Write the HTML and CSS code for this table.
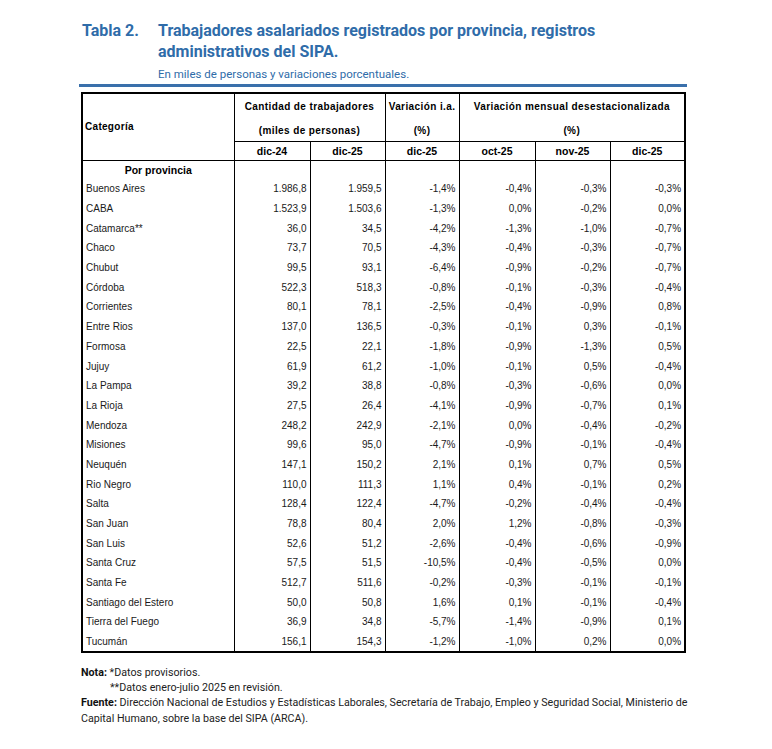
FILE: index.html
```html
<!DOCTYPE html>
<html lang="es">
<head>
<meta charset="utf-8">
<title>Tabla 2</title>
<link rel="stylesheet" href="styles.css">
</head>
<body>
<div class="page">
  <header class="head">
    <div class="num">Tabla 2.</div>
    <div class="titles">
      <h1 class="title">Trabajadores asalariados registrados por provincia, registros administrativos del SIPA.</h1>
      <p class="sub">En miles de personas y variaciones porcentuales.</p>
    </div>
  </header>
  <div class="bar"></div>
  <table class="tbl">
    <colgroup>
      <col class="c-cat"><col class="c-a"><col class="c-b"><col class="c-c"><col class="c-d"><col class="c-e"><col class="c-f">
    </colgroup>
    <thead>
      <tr class="h1">
        <th rowspan="3" class="cat-h">Categoría</th>
        <th colspan="2" class="sp nb">Cantidad de trabajadores</th>
        <th class="sp nb">Variación i.a.</th>
        <th colspan="3" class="sp nb">Variación mensual desestacionalizada</th>
      </tr>
      <tr class="h2">
        <th colspan="2" class="sp nt">(miles de personas)</th>
        <th class="sp nt">(%)</th>
        <th colspan="3" class="sp nt">(%)</th>
      </tr>
      <tr class="h3">
        <th>dic-24</th><th>dic-25</th><th>dic-25</th><th>oct-25</th><th>nov-25</th><th>dic-25</th>
      </tr>
    </thead>
    <tbody>
      <tr class="grp"><td class="grp-t">Por provincia</td><td></td><td></td><td></td><td></td><td></td><td></td></tr>
      <tr><td>Buenos Aires</td><td>1.986,8</td><td>1.959,5</td><td>-1,4%</td><td>-0,4%</td><td>-0,3%</td><td>-0,3%</td></tr>
      <tr><td>CABA</td><td>1.523,9</td><td>1.503,6</td><td>-1,3%</td><td>0,0%</td><td>-0,2%</td><td>0,0%</td></tr>
      <tr><td>Catamarca**</td><td>36,0</td><td>34,5</td><td>-4,2%</td><td>-1,3%</td><td>-1,0%</td><td>-0,7%</td></tr>
      <tr><td>Chaco</td><td>73,7</td><td>70,5</td><td>-4,3%</td><td>-0,4%</td><td>-0,3%</td><td>-0,7%</td></tr>
      <tr><td>Chubut</td><td>99,5</td><td>93,1</td><td>-6,4%</td><td>-0,9%</td><td>-0,2%</td><td>-0,7%</td></tr>
      <tr><td>Córdoba</td><td>522,3</td><td>518,3</td><td>-0,8%</td><td>-0,1%</td><td>-0,3%</td><td>-0,4%</td></tr>
      <tr><td>Corrientes</td><td>80,1</td><td>78,1</td><td>-2,5%</td><td>-0,4%</td><td>-0,9%</td><td>0,8%</td></tr>
      <tr><td>Entre Rios</td><td>137,0</td><td>136,5</td><td>-0,3%</td><td>-0,1%</td><td>0,3%</td><td>-0,1%</td></tr>
      <tr><td>Formosa</td><td>22,5</td><td>22,1</td><td>-1,8%</td><td>-0,9%</td><td>-1,3%</td><td>0,5%</td></tr>
      <tr><td>Jujuy</td><td>61,9</td><td>61,2</td><td>-1,0%</td><td>-0,1%</td><td>0,5%</td><td>-0,4%</td></tr>
      <tr><td>La Pampa</td><td>39,2</td><td>38,8</td><td>-0,8%</td><td>-0,3%</td><td>-0,6%</td><td>0,0%</td></tr>
      <tr><td>La Rioja</td><td>27,5</td><td>26,4</td><td>-4,1%</td><td>-0,9%</td><td>-0,7%</td><td>0,1%</td></tr>
      <tr><td>Mendoza</td><td>248,2</td><td>242,9</td><td>-2,1%</td><td>0,0%</td><td>-0,4%</td><td>-0,2%</td></tr>
      <tr><td>Misiones</td><td>99,6</td><td>95,0</td><td>-4,7%</td><td>-0,9%</td><td>-0,1%</td><td>-0,4%</td></tr>
      <tr><td>Neuquén</td><td>147,1</td><td>150,2</td><td>2,1%</td><td>0,1%</td><td>0,7%</td><td>0,5%</td></tr>
      <tr><td>Rio Negro</td><td>110,0</td><td>111,3</td><td>1,1%</td><td>0,4%</td><td>-0,1%</td><td>0,2%</td></tr>
      <tr><td>Salta</td><td>128,4</td><td>122,4</td><td>-4,7%</td><td>-0,2%</td><td>-0,4%</td><td>-0,4%</td></tr>
      <tr><td>San Juan</td><td>78,8</td><td>80,4</td><td>2,0%</td><td>1,2%</td><td>-0,8%</td><td>-0,3%</td></tr>
      <tr><td>San Luis</td><td>52,6</td><td>51,2</td><td>-2,6%</td><td>-0,4%</td><td>-0,6%</td><td>-0,9%</td></tr>
      <tr><td>Santa Cruz</td><td>57,5</td><td>51,5</td><td>-10,5%</td><td>-0,4%</td><td>-0,5%</td><td>0,0%</td></tr>
      <tr><td>Santa Fe</td><td>512,7</td><td>511,6</td><td>-0,2%</td><td>-0,3%</td><td>-0,1%</td><td>-0,1%</td></tr>
      <tr><td>Santiago del Estero</td><td>50,0</td><td>50,8</td><td>1,6%</td><td>0,1%</td><td>-0,1%</td><td>-0,4%</td></tr>
      <tr><td>Tierra del Fuego</td><td>36,9</td><td>34,8</td><td>-5,7%</td><td>-1,4%</td><td>-0,9%</td><td>0,1%</td></tr>
      <tr><td>Tucumán</td><td>156,1</td><td>154,3</td><td>-1,2%</td><td>-1,0%</td><td>0,2%</td><td>0,0%</td></tr>
    </tbody>
  </table>
  <footer class="notes">
    <p><b>Nota:</b> *Datos provisorios.</p>
    <p class="ind">**Datos enero-julio 2025 en revisión.</p>
    <p><b>Fuente:</b> Dirección Nacional de Estudios y Estadísticas Laborales, Secretaría de Trabajo, Empleo y Seguridad Social, Ministerio de<br>Capital Humano, sobre la base del SIPA (ARCA).</p>
  </footer>
</div>
</body>
</html>
```

FILE: styles.css
```css
html, body {
  margin: 0;
  padding: 0;
  background: #ffffff;
}

.page {
  padding: 20px 0 0 79px;
  width: 620px;
  font-family: Roboto, "Liberation Sans", Arial, sans-serif;
}

.head {
  display: grid;
  grid-template-columns: 76px 1fr;
  padding-left: 3px;
  color: #2f6ca9;
}

.num {
  font-size: 16px;
  font-weight: 700;
  line-height: 21px;
}

.title {
  margin: 0;
  font-size: 16px;
  font-weight: 700;
  line-height: 21px;
  width: 450px;
}

.sub {
  margin: 5px 0 0 0;
  font-size: 11.5px;
  line-height: 15px;
}

.bar {
  margin-top: 2px;
  width: 608px;
  height: 3px;
  background: #3a70ab;
}

.tbl {
  margin: 5px 0 0 2px;
  border-collapse: collapse;
  table-layout: fixed;
  width: 604px;
  font-family: "Liberation Sans", Arial, sans-serif;
  font-size: 10px;
  color: #1a1a1a;
  border: 2px solid #000;
}

.c-cat { width: 152px; }
.c-a { width: 76px; }
.c-b { width: 75px; }
.c-c { width: 74px; }
.c-d { width: 76px; }
.c-e { width: 75px; }
.c-f { width: 75px; }

.tbl th {
  border: 1px solid #000;
  font-weight: 700;
  color: #000;
  padding: 0;
  text-align: center;
  vertical-align: middle;
}

.tbl th.sp {
  letter-spacing: 0.4px;
}

.tbl th.nb { border-bottom: none; }
.tbl th.nt { border-top: none; }

.h1 { height: 25px; }
.h1 th { vertical-align: middle; padding-top: 1px; }
.h2 { height: 23px; }
.h2 th { vertical-align: middle; padding-top: 2px; }
.h3 { height: 19px; }
.h3 th { font-size: 10.5px; }

.tbl th.cat-h {
  text-align: left;
  vertical-align: middle;
  padding: 0 0 0 2px;
  letter-spacing: 0.3px;
}

.tbl td {
  border-left: 1px solid #000;
  border-right: 1px solid #000;
  padding: 0 3px 0 3px;
  text-align: right;
  white-space: nowrap;
  vertical-align: middle;
}

.tbl td:first-child {
  text-align: left;
  padding-left: 3px;
}

.tbl tbody tr { height: 19.7px; }

.tbl tbody tr.grp { height: 19px; }

.tbl td.grp-t {
  text-align: center;
  font-weight: 700;
  font-size: 10.5px;
  color: #000;
}

.notes {
  margin-top: 12px;
  padding-left: 2px;
  font-size: 10.7px;
  line-height: 15.4px;
  color: #222;
}

.notes p {
  margin: 0;
  white-space: nowrap;
}

.notes b {
  font-weight: 700;
  color: #111;
}

.notes .ind {
  padding-left: 29px;
}
```
